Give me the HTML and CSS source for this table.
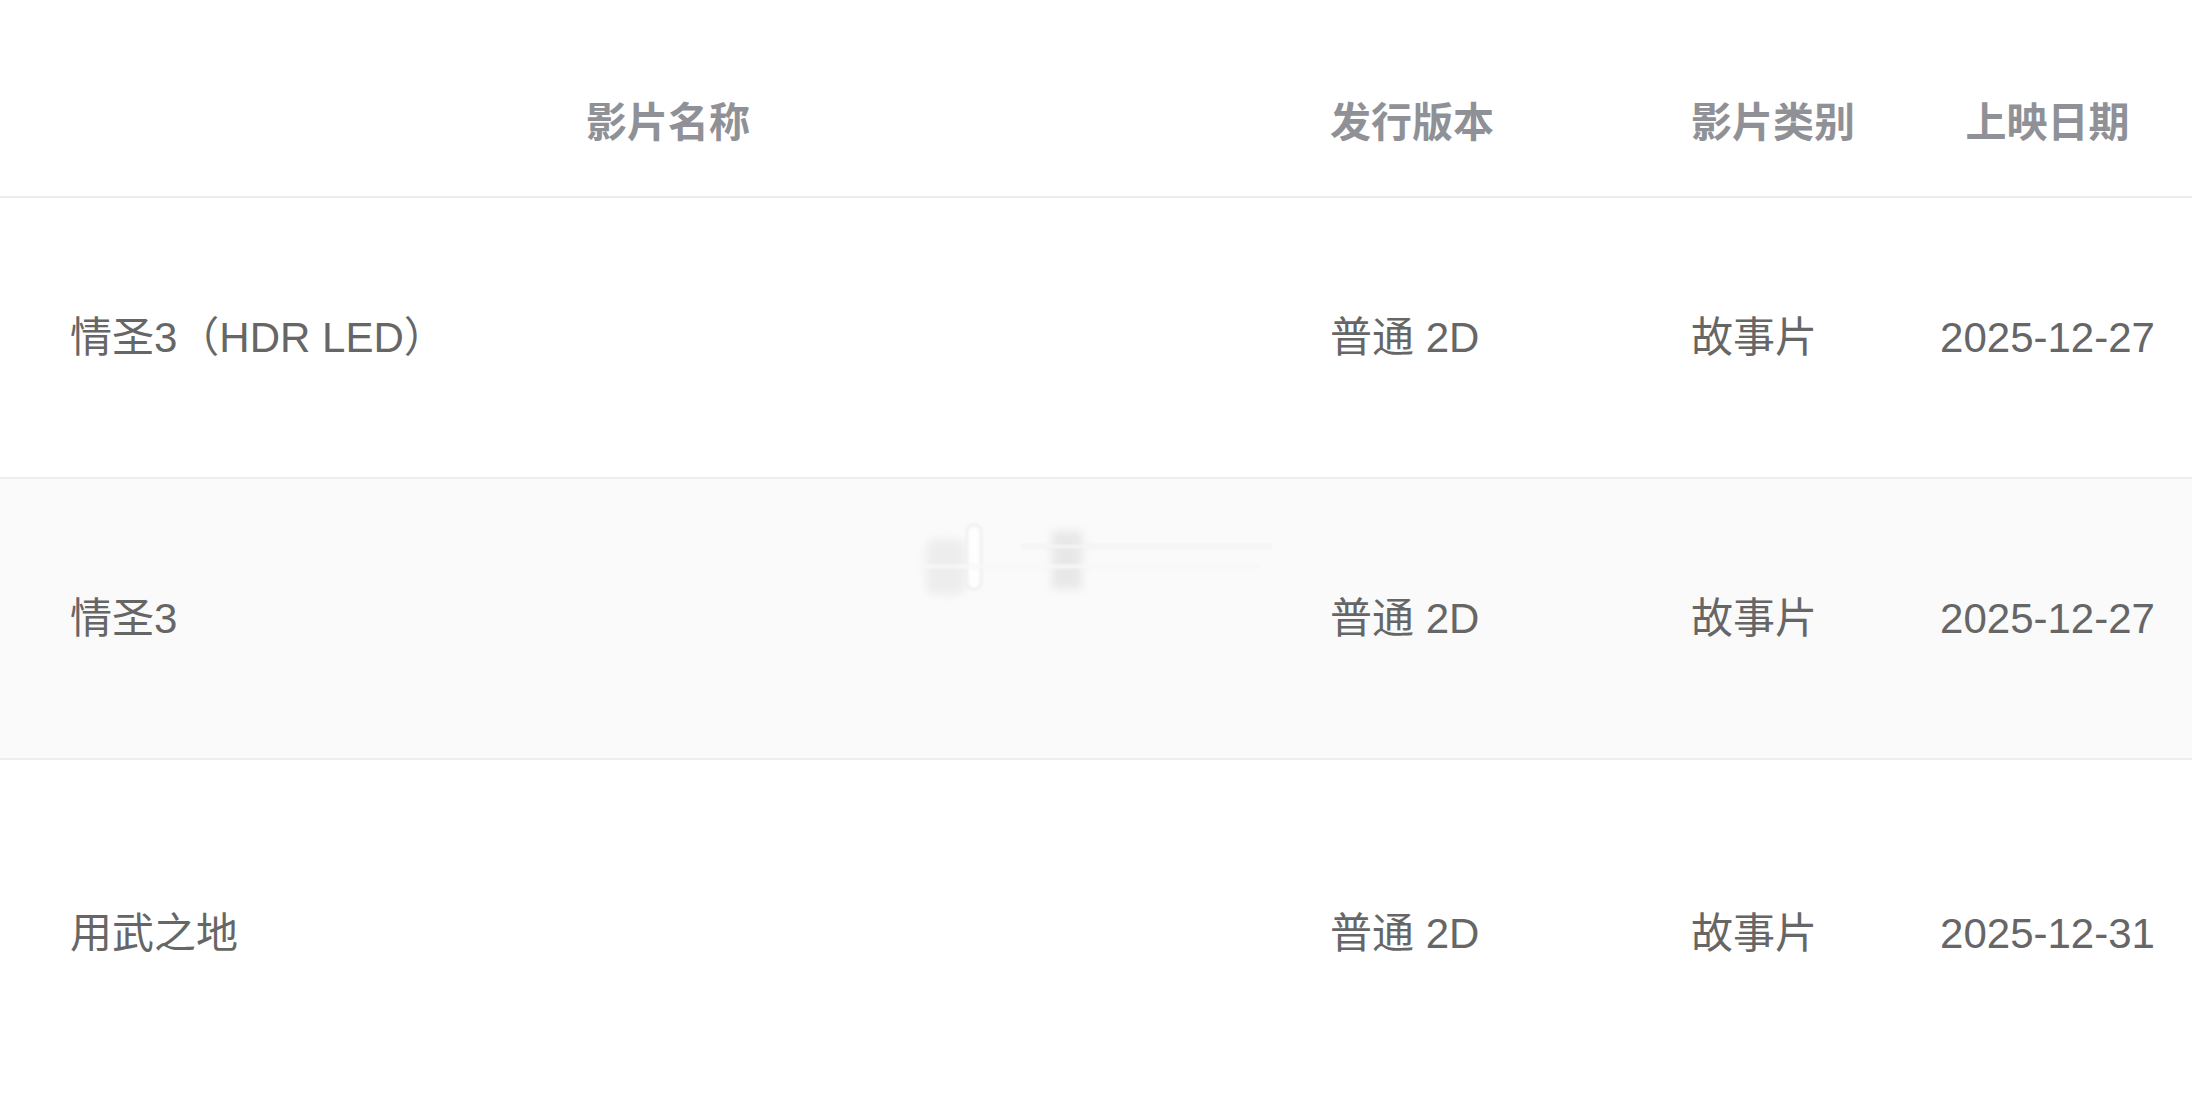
FILE: index.html
```html
<!DOCTYPE html>
<html lang="zh-CN">
<head>
<meta charset="utf-8">
<title>影片列表</title>
<link rel="stylesheet" href="styles.css">
</head>
<body>
<div class="table">
  <div class="row head">
    <div class="cell c1">影片名称</div>
    <div class="cell c2">发行版本</div>
    <div class="cell c3">影片类别</div>
    <div class="cell c4">上映日期</div>
  </div>
  <div class="row body">
    <div class="cell c1">情圣3（HDR LED）</div>
    <div class="cell c2">普通 2D</div>
    <div class="cell c3">故事片</div>
    <div class="cell c4">2025-12-27</div>
  </div>
  <div class="row body alt">
    <div class="cell c1">情圣3</div>
    <div class="cell c2">普通 2D</div>
    <div class="cell c3">故事片</div>
    <div class="cell c4">2025-12-27</div>
    <svg class="smudge" width="360" height="90" viewBox="0 0 360 90">
      <defs>
        <filter id="b1" x="-20%" y="-50%" width="140%" height="200%"><feGaussianBlur stdDeviation="4"/></filter>
        <filter id="b2" x="-20%" y="-50%" width="140%" height="200%"><feGaussianBlur stdDeviation="1.5"/></filter>
      </defs>
      <g filter="url(#b1)" fill="#e6e6e6">
        <rect x="14" y="22" width="40" height="56" rx="10" fill="#ececec"/>
        <rect x="140" y="14" width="30" height="58" fill="#e6e6e6"/>
      </g>
      <g filter="url(#b2)">
        <rect x="55" y="8" width="14" height="64" rx="7" fill="#ffffff" stroke="#e2e2e2" stroke-width="1.5"/>
        <rect x="6" y="48" width="340" height="3" rx="1.5" fill="#ffffff" stroke="#eeeeee" stroke-width="1"/>
        <rect x="110" y="28" width="290" height="3" rx="1.5" fill="#ffffff" stroke="#e4e4e4" stroke-width="1"/>
      </g>
    </svg>
  </div>
  <div class="row body last">
    <div class="cell c1">用武之地</div>
    <div class="cell c2">普通 2D</div>
    <div class="cell c3">故事片</div>
    <div class="cell c4">2025-12-31</div>
  </div>
</div>
</body>
</html>
```

FILE: styles.css
```css
html, body {
  margin: 0;
  padding: 0;
  background: #ffffff;
}

body {
  width: 2192px;
  height: 1110px;
  overflow: hidden;
  font-family: "Liberation Sans", "Noto Sans CJK SC", sans-serif;
}

.table {
  display: flex;
  flex-direction: column;
}

.row {
  display: grid;
  grid-template-columns: 1330px 361px 212px 1fr;
  align-items: center;
  position: relative;
}

.cell {
  font-size: 42px;
  line-height: 1;
  white-space: nowrap;
}

.head {
  height: 146px;
  padding-top: 50px;
  border-bottom: 2px solid #ebedf0;
}

.head .cell {
  color: #8f9197;
  font-weight: 700;
  font-size: 41px;
}

.head .c1 {
  text-align: center;
  padding-left: 6px;
}

.body {
  height: 279px;
  border-bottom: 2px solid #eeeeee;
  color: #666666;
}

.body .c1 {
  padding-left: 70px;
}

.c4 {
  text-align: center;
}

.alt {
  background: #fafafa;
}

.last {
  height: 348px;
  border-bottom: none;
}

.smudge {
  position: absolute;
  left: 912px;
  top: 38px;
  opacity: 0.9;
}
```
